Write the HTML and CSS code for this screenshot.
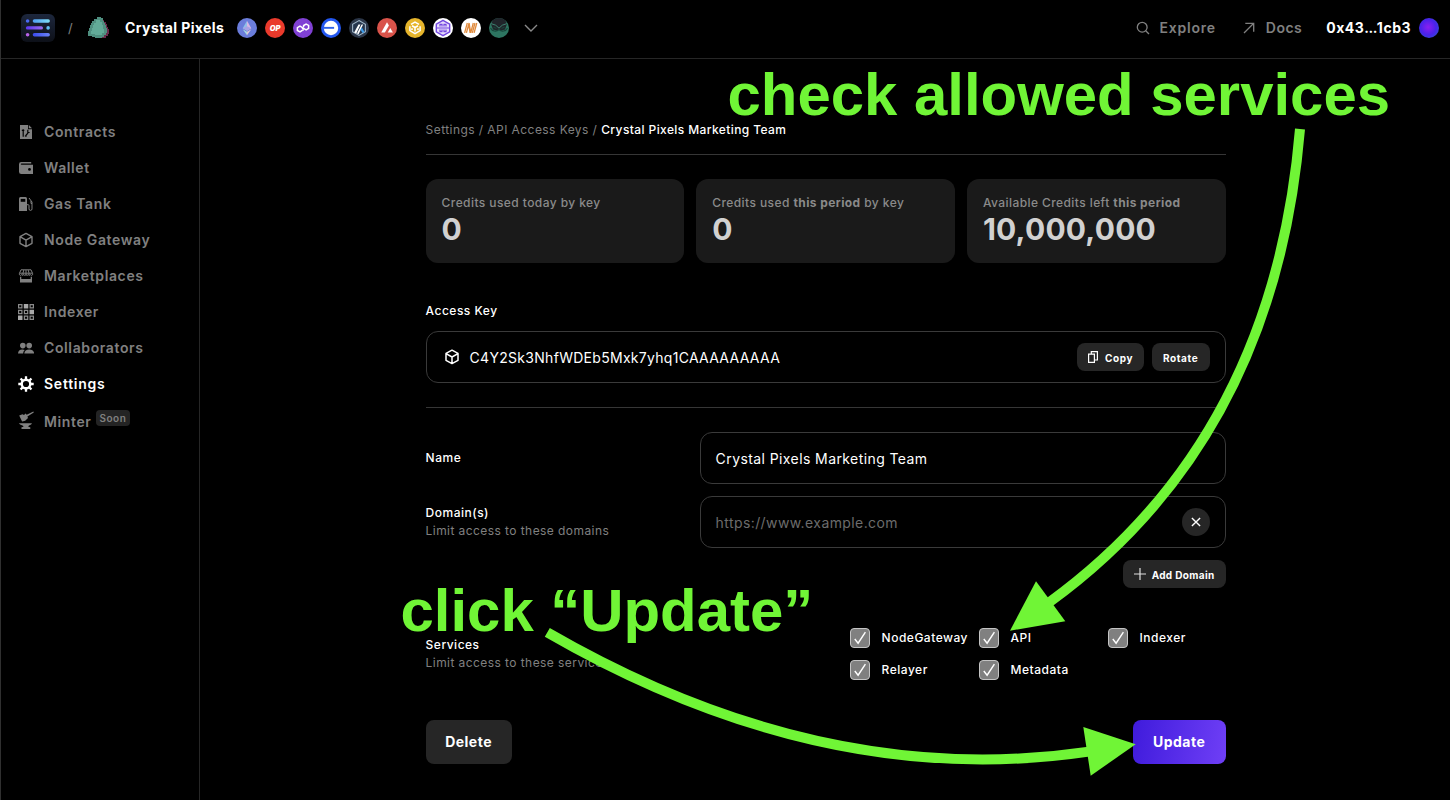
FILE: index.html
```html
<!DOCTYPE html>
<html lang="en">
<head>
<meta charset="utf-8">
<title>Crystal Pixels</title>
<link rel="stylesheet" href="styles.css">
</head>
<body>
<div class="app">
  <header class="topbar">
    <svg class="logo" width="34" height="28" viewBox="0 0 34 28">
      <defs>
        <linearGradient id="lg0" x1="0" y1="0" x2="0" y2="1"><stop offset="0" stop-color="#1d273d"/><stop offset="1" stop-color="#0d1018"/></linearGradient>
        <linearGradient id="lg1" x1="0" x2="1"><stop offset="0" stop-color="#4f9ef3"/><stop offset="1" stop-color="#7fe0f6"/></linearGradient>
        <linearGradient id="lg2" x1="0" x2="1"><stop offset="0" stop-color="#5a35f2"/><stop offset="1" stop-color="#9a6cf0"/></linearGradient>
        <linearGradient id="lg3" x1="0" x2="1"><stop offset="0" stop-color="#3b4cf0"/><stop offset="1" stop-color="#6b83f5"/></linearGradient>
      </defs>
      <rect width="34" height="28" rx="6" fill="url(#lg0)"/>
      <circle cx="6.6" cy="7" r="1.8" fill="#4a6af2"/><rect x="11.7" y="5.3" width="17.2" height="3.4" rx="1.7" fill="url(#lg1)"/>
      <rect x="4.8" y="12.2" width="17.2" height="3.4" rx="1.7" fill="url(#lg2)"/><circle cx="27.1" cy="13.9" r="1.8" fill="#61bdf0"/>
      <circle cx="6.6" cy="20.8" r="1.8" fill="#b862e8"/><rect x="11.7" y="19.1" width="17.2" height="3.4" rx="1.7" fill="url(#lg3)"/>
    </svg>
    <span class="slash">/</span>
    <svg class="gem" width="22" height="22" viewBox="0 0 22 22">
      <path d="M13 1h2v2h1v2h2v2h1v3h1v2h1v5h-1v2h-2v2H12z" fill="#6b2a4c"/>
      <path d="M9 0h4v1h2v3h1v2h1v2h1v3h1v5h-1v2h-2v2h-2v1H7v-1H4v-1H0v-5h1v-3h1V8h1V6h1V4h2V2h3z" fill="#4f8f80"/>
      <path d="M8 3h4v2h2v3h1v4h1v4h-2v2H7v-1H3v-3h1v-3h1V8h1V6h2z" fill="#62aa98"/>
    </svg>
    <span class="project">Crystal Pixels</span>
    <div class="chains">
      <svg width="20" height="20" viewBox="0 0 20 20"><circle cx="10" cy="10" r="10" fill="#6b7ddb"/><path d="M10 2.8L5.7 10.2 10 12.7z" fill="#8fc0e8"/><path d="M10 2.8l4.3 7.4L10 12.7z" fill="#d9b7e4"/><path d="M5.7 10.2L10 8.2l4.3 2L10 12.7z" fill="#a9a3e6"/><path d="M5.7 11.3L10 17.2v-3.4z" fill="#a8dbe0"/><path d="M14.3 11.3L10 17.2v-3.4z" fill="#dcc6d8"/></svg>
      <svg width="20" height="20" viewBox="0 0 20 20"><circle cx="10" cy="10" r="10" fill="#ea3a2c"/><text class="op" x="10" y="12.8" text-anchor="middle">OP</text></svg>
      <svg width="20" height="20" viewBox="0 0 20 20"><circle cx="10" cy="10" r="10" fill="#8040d4"/><path d="M9.300 12.400L7 13.900 4.400 12.500V9.700L7 8.200l2.500 1.500v1.300M10.600 9.300V7.500l2.500-1.500 2.500 1.400v2.900l-2.500 1.500-2.500-1.400M9.400 12.300l1.300-.8M9.400 9.600l1.300.9" fill="none" stroke="#fff" stroke-width="1.500"/></svg>
      <svg width="20" height="20" viewBox="0 0 20 20"><circle cx="10" cy="10" r="10" fill="#2357f0"/><circle cx="10" cy="10" r="7.2" fill="#fff"/><path d="M2.500 8.900h10.600v1.900H2.500z" fill="#2f61e8"/></svg>
      <svg width="20" height="20" viewBox="0 0 20 20"><circle cx="10" cy="10" r="10" fill="#2b3648"/><path d="M10 2.600l6.400 3.600v7.600L10 17.400l-6.400-3.600V6.200z" fill="#26364d" stroke="#9db3c6" stroke-width="1.100"/><path d="M9.500 6.500h2L7.300 15.500l-2.200-1z" fill="#fff"/><path d="M12.600 6.500h1.500L9.600 16.200l-1.600-.8z" fill="#fff"/><path d="M12.700 9.300l2.800 4.600-1.900 1.200-2.100-3.400z" fill="#3c9be8"/></svg>
      <svg width="20" height="20" viewBox="0 0 20 20"><circle cx="10" cy="10" r="10" fill="#d9534a"/><path d="M10 4.200l1.900 3.300-4 6.900H4.200z" fill="#fff"/><path d="M13.300 9.900l2.600 4.500h-5.200z" fill="#fff"/></svg>
      <svg width="20" height="20" viewBox="0 0 20 20"><circle cx="10" cy="10" r="10" fill="#e6b52c"/><path d="M6 6.300L10 4l4 2.300M4.900 8.200v4.400L10 15.700l5.100-3.100V8.200" fill="none" stroke="#fff" stroke-width="1.500"/><path d="M7 7.700l3 1.800 3-1.800M10 9.500v4M7 10.300v1.600M13 10.300v1.600" fill="none" stroke="#fff" stroke-width="1.600"/></svg>
      <svg width="20" height="20" viewBox="0 0 20 20"><circle cx="10" cy="10" r="10" fill="#fff"/><path d="M10 2.300l6.700 3.800v7.800L10 17.700l-6.700-3.800V6.100z" fill="#e6dcfb" stroke="#7347e0" stroke-width="1.400"/><path d="M3.500 10h13M7 8.600V6.400h2v2.200M11 8.600V6.400h2v2.200M7 11.500v2.200h2v-2.200M11 11.500v2.200h2v-2.200" fill="none" stroke="#7347e0" stroke-width="1.200"/></svg>
      <svg width="20" height="20" viewBox="0 0 20 20"><circle cx="10" cy="10" r="10" fill="#fff"/><path d="M3.600 14.800L6.300 5M5.400 14.800L8.100 5l1.600 9.800L12.300 5M8.100 9l1 5.800M11.300 14.800L14 5M13.100 14.800L15.800 5" fill="none" stroke="#e08a3c" stroke-width="1.300"/></svg>
      <svg width="20" height="20" viewBox="0 0 20 20"><circle cx="10" cy="10" r="10" fill="#2d7561"/><path d="M3.800 2.200a10 10 0 0 1 12.400 0L18 6l-2 5.500-4 1-2-1-2 1-4-1L2 6z" fill="#20242a"/><path d="M2 5.600l4.700 1.600L10 10.200l3.300-3L18 5.600" fill="none" stroke="#3d8270" stroke-width="1"/><path d="M1.500 10c1.500 3.500 6 4 8.500 1.500 2.500 2.500 7 2 8.500-1.500M4.500 9l3 1.500M15.500 9l-3 1.500" fill="none" stroke="#18463b" stroke-width="1.100"/></svg>
    </div>
    <svg class="chevron" width="14" height="8" viewBox="0 0 14 8"><path d="M1 1l6 6 6-6" fill="none" stroke="#8a8a8a" stroke-width="1.400"/></svg>
    <nav class="toplinks">
      <a class="toplink explore"><svg width="14" height="14" viewBox="0 0 14 14"><circle cx="6.200" cy="6.200" r="4.900" fill="none" stroke="#808080" stroke-width="1.300"/><path d="M9.700 9.700l3.300 3.300" stroke="#808080" stroke-width="1.300"/></svg><span>Explore</span></a>
      <a class="toplink docs"><svg width="12" height="12" viewBox="0 0 12 12"><path d="M1 11L10.500 1.500M2.300 1.300h8.400v8.400" fill="none" stroke="#808080" stroke-width="1.300"/></svg><span>Docs</span></a>
      <span class="account">0x43<span class="dots">...</span>1cb3</span>
      <span class="avatar"></span>
    </nav>
  </header>

  <div class="body">
    <aside class="sidebar">
      <a class="item"><svg width="16" height="16" viewBox="0 0 16 16"><path d="M2 1h8v4.200h4V15H2z" fill="#808080"/><path d="M10.800 1L14 4.300h-3.200z" fill="#808080"/><path d="M5.200 12.700V5.300M3.800 6.300h2.500M9.800 5.800v3.400L8 11.300v1.500M6.800 12h1.500M9.800 8.500h1.800" fill="none" stroke="#000" stroke-width="1.200"/></svg><span>Contracts</span></a>
      <a class="item"><svg width="16" height="16" viewBox="0 0 16 16"><path d="M13.200 2H3.300A2.300 2.300 0 0 0 1 4.300v7.400A2.300 2.300 0 0 0 3.300 14H15V4.800H3.500c-1 0-1-1.300 0-1.300h9.700z" fill="#808080"/><circle cx="11.500" cy="9.400" r="1.400" fill="#000"/></svg><span>Wallet</span></a>
      <a class="item"><svg width="16" height="16" viewBox="0 0 16 16"><path d="M1 2.500Q1 1 2.500 1h5Q9 1 9 2.500V15H1z" fill="#808080"/><path d="M2.700 2.900h4.600v2.900H2.700z" fill="#000"/><path d="M9 8.700h1.200q.8 0 .8.900v3.300q0 1.500 1.500 1.500T14 12.900V6l-3-4M13 5v2.500h1" fill="none" stroke="#808080" stroke-width="1"/></svg><span>Gas Tank</span></a>
      <a class="item"><svg width="16" height="16" viewBox="0 0 16 16"><path d="M8 1.400l6 3.300v6.600l-6 3.300-6-3.300V4.700zM2 4.700l6 3.400 6-3.400M8 8.100v6.500" fill="none" stroke="#808080" stroke-width="1.400" stroke-linejoin="round"/></svg><span>Node Gateway</span></a>
      <a class="item"><svg width="16" height="16" viewBox="0 0 16 16"><path d="M3 1.800h10l1.600 3.700v1.200q-1.100 1.400-2.200 0-1.100 1.400-2.200 0-1.100 1.400-2.200 0-1.100 1.400-2.200 0-1.100 1.400-2.200 0-1.100 1.400-2.200 0V5.500zM1.600 5.200h12.800M5.800 2L5 5v2M10.200 2l.8 3v2M8 2v5" fill="none" stroke="#808080" stroke-width="1"/><path d="M2 8.700h12V14.500H2zM3.300 8.700v2.300h9.400V8.700z" fill="#808080" fill-rule="evenodd"/></svg><span>Marketplaces</span></a>
      <a class="item"><svg width="16" height="16" viewBox="0 0 16 16"><g fill="none" stroke="#8a8a8a" stroke-width="1.200"><path d="M.6.600h3.300v3.300H.6zM12.100.600h3.300v3.300h-3.300zM.6 6.400h3.300v3.300H.6zM6.400 6.400h3.300v3.300H6.400zM6.400 12.100h3.300v3.300H6.400zM12.100 12.100h3.300v3.300h-3.300z"/></g><path d="M5.800 0h4.500v4.500H5.800zM11.500 5.800H16v4.500h-4.500zM0 11.500h4.500V16H0z" fill="#a8a8a8"/></svg><span>Indexer</span></a>
      <a class="item"><svg width="16" height="16" viewBox="0 0 16 16"><circle cx="4.800" cy="5.600" r="2.800" fill="#808080"/><circle cx="11.200" cy="5.600" r="2.800" fill="#808080"/><path d="M0 13.400q.3-3.600 4.300-3.900 1.500 0 2.400.5-1.500 1.300-1.600 3.400zM6.300 13.400q.4-4 4.900-4t5 4z" fill="#808080"/></svg><span>Collaborators</span></a>
      <a class="item active"><svg width="16" height="16" viewBox="0 0 16 16"><circle cx="8" cy="8" r="4.300" fill="none" stroke="#fff" stroke-width="2.400"/><path d="M8 .3v3M8 12.700v3M.3 8h3M12.700 8h3M2.550 2.550l2.100 2.100M11.350 11.350l2.100 2.100M2.550 13.450l2.100-2.100M11.350 4.650l2.100-2.100" stroke="#fff" stroke-width="2.300"/></svg><span>Settings</span></a>
      <a class="item minter"><svg width="16" height="18" viewBox="0 0 16 18"><path d="M1.200 4.600l2.900 6 3.100-.9 2.800-2.600-.6-1.700L15.800 1.500 15.400.400 8.700 3.800 7.600 2.500 6 4 4.500 3.200z" fill="#808080"/><path d="M.8 12.300H14q-.3 1.500-3 2.200-.7.300-.7 1 .2.700 2 .7V18H3.500v-1.800q1.800 0 2-.7 0-.7-1-1Q1.500 13.800.8 12.300z" fill="#808080"/></svg><span>Minter</span><span class="soon">Soon</span></a>
    </aside>

    <main class="content">
      <div class="crumbs"><span class="dim">Settings / API Access Keys / </span><span>Crystal Pixels Marketing Team</span></div>
      <div class="rule"></div>
      <section class="stats">
        <div class="stat"><div class="label">Credits used today by key</div><div class="value">0</div></div>
        <div class="stat"><div class="label">Credits used <b>this period</b> by key</div><div class="value">0</div></div>
        <div class="stat"><div class="label">Available Credits left <b>this period</b></div><div class="value">10,000,000</div></div>
      </section>
      <div class="keylabel">Access Key</div>
      <div class="field keyfield">
        <svg width="16" height="16" viewBox="0 0 16 16"><path d="M8 1.200l6 3.200v6.900l-6 3.300-6-3.300V4.400zM2 4.700l6 3.300 6-3.300M8 8v6.400" fill="none" stroke="#fff" stroke-width="1.500" stroke-linejoin="round"/></svg>
        <span class="key">C4Y2Sk3NhfWDEb5Mxk7yhq1CAAAAAAAAA</span>
        <button class="btn small copy"><svg width="12" height="12" viewBox="0 0 12 12"><path d="M1.600 3.100h5.800v8.300H1.600zM4.300 3V.700h6.100V9H7.600" fill="none" stroke="#fff" stroke-width="1.200"/></svg><span>Copy</span></button>
        <button class="btn small rotate"><span>Rotate</span></button>
      </div>
      <div class="rule second"></div>
      <div class="row">
        <div class="rowlabel">Name</div>
        <div class="field wide">Crystal Pixels Marketing Team</div>
      </div>
      <div class="row domains">
        <div class="rowlabel">Domain(s)<div class="hint">Limit access to these domains</div></div>
        <div class="field wide placeholder"><span>https://www.example.com</span><button class="clear"><svg width="10" height="10" viewBox="0 0 10 10"><path d="M.900.900l8.200 8.200M9.100.900L.900 9.100" stroke="#fff" stroke-width="1.400"/></svg></button></div>
      </div>
      <div class="addrow"><button class="btn small add"><svg width="12" height="12" viewBox="0 0 12 12"><path d="M6 0v12M0 6h12" stroke="#e0e0e0" stroke-width="1.200"/></svg><span>Add Domain</span></button></div>
      <div class="row services">
        <div class="rowlabel">Services<div class="hint">Limit access to these services</div></div>
        <div class="checks">
          <label class="check"><span class="box"><svg width="18" height="18" viewBox="0 0 18 18"><path d="M3.800 10l3.300 4.200 7.300-11" fill="none" stroke="#fff" stroke-width="1.400"/></svg></span>NodeGateway</label>
          <label class="check"><span class="box"><svg width="18" height="18" viewBox="0 0 18 18"><path d="M3.800 10l3.300 4.200 7.300-11" fill="none" stroke="#fff" stroke-width="1.400"/></svg></span>API</label>
          <label class="check"><span class="box"><svg width="18" height="18" viewBox="0 0 18 18"><path d="M3.800 10l3.300 4.200 7.300-11" fill="none" stroke="#fff" stroke-width="1.400"/></svg></span>Indexer</label>
          <label class="check"><span class="box"><svg width="18" height="18" viewBox="0 0 18 18"><path d="M3.800 10l3.300 4.200 7.300-11" fill="none" stroke="#fff" stroke-width="1.400"/></svg></span>Relayer</label>
          <label class="check"><span class="box"><svg width="18" height="18" viewBox="0 0 18 18"><path d="M3.800 10l3.300 4.200 7.300-11" fill="none" stroke="#fff" stroke-width="1.400"/></svg></span>Metadata</label>
        </div>
      </div>
      <div class="actions"><button class="btn large">Delete</button><button class="btn large primary">Update</button></div>
    </main>
  </div>

  <svg class="notes" width="1450" height="800" viewBox="0 0 1450 800">
    <path d="M1300 129Q1274 439 1049 602.500" class="stroke"/>
    <path d="M1010 630.700L1036 581.300 1065.300 621.300z" class="head"/>
    <path d="M547.300 632.300Q822 791 1089 751.600" class="stroke"/>
    <path d="M1135.700 744.300L1083.300 727 1090.700 775.700z" class="head"/>
    <text class="note" x="727.500" y="115.300">check allowed services</text>
    <text class="note" x="400.500" y="631.300">click “Update”</text>
  </svg>
</div>
</body>
</html>
```
FILE: styles.css
```css
* { box-sizing: border-box; }
body {
  margin: 0;
  background: #000;
  color: #fff;
  font-family: Inter, "Liberation Sans", sans-serif;
  font-size: 14px;
  letter-spacing: 0.5px;
}
button { font: inherit; letter-spacing: inherit; color: inherit; border: 0; padding: 0; }
svg { display: block; flex: none; }

.app {
  position: relative;
  width: 1450px;
  height: 800px;
  overflow: hidden;
  border-left: 1px solid #303030;
  display: flex;
  flex-direction: column;
}

.topbar {
  height: 59px;
  flex: none;
  border-bottom: 1px solid #262626;
  display: flex;
  align-items: center;
  padding: 0 11px 2px 20px;
  font-weight: 700;
}
.slash { width: 33px; padding-left: 13px; color: #808080; font-weight: 400; font-size: 13px; }
.gem { margin-right: 15px; }
.project { width: 112px; white-space: nowrap; letter-spacing: 0.4px; margin-top: -1px; }
.chains { display: flex; gap: 8px; }
.op { font: italic 900 7.5px Inter, sans-serif; fill: #fff; letter-spacing: 0; }
.chevron { margin-left: 15px; }
.toplinks { margin-left: auto; display: flex; align-items: center; }
.toplinks span { margin-top: -1px; }
.toplink { display: flex; align-items: center; gap: 10px; color: #808080; font-weight: 600; }
.toplink.explore { letter-spacing: 0.75px; }
.toplink.docs { margin-left: 27px; gap: 11px; }
.account { margin-left: 24px; }
.account .dots { letter-spacing: -0.5px; }
.avatar {
  width: 20px;
  height: 20px;
  margin-left: 8px;
  border-radius: 50%;
  background: radial-gradient(circle at 46% 46%, #8a1ff0 0, #4a22ea 50%, #2f4fd0 85%, #356fb5 100%);
}
.toplinks .avatar { margin-top: 0; }

.body { flex: 1; display: flex; }
.sidebar {
  width: 199px;
  flex: none;
  border-right: 1px solid #262626;
  padding: 55px 0 0 17px;
}
.item { display: flex; align-items: center; gap: 10px; height: 36px; color: #808080; font-weight: 600; letter-spacing: 0.62px; }
.item > span { margin-top: -2px; }
.item.active { color: #fff; }
.item.active > span { letter-spacing: 0.75px; }
.item.minter { height: 38px; }
.item.minter > svg { margin-top: -3px; }
.item.minter > span:not(.soon) { margin-top: 1px; }
.item > .soon {
  margin: -7px 0 0 -6px;
  height: 16px;
  padding: 0 4px;
  border-radius: 4px;
  background: #242424;
  font-size: 10px;
  line-height: 17px;
  letter-spacing: 0.5px;
}

.content { width: 800px; margin-left: 225.6px; padding-top: 62px; font-size: 12px; font-weight: 450; line-height: 18px; }
.crumbs { white-space: pre; letter-spacing: 0.4px; }
.dim, .hint { color: #808080; font-weight: 400; letter-spacing: 0.43px; }
.rule { height: 1px; background: #363636; margin-top: 15px; }
.rule.second { margin-top: 24px; }
.stats { display: grid; grid-template-columns: repeat(3, 1fr); gap: 12px; margin-top: 24px; }
.stat { height: 84px; border-radius: 12px; background: #1a1a1a; padding: 15px 16px; color: #8a8a8a; letter-spacing: 0.42px; }
.value { font-size: 30px; font-weight: 700; line-height: 34px; color: #d1d1d1; letter-spacing: 0.2px; }
.keylabel { margin-top: 39px; }
.field {
  height: 52px;
  border: 1px solid #3a3a3a;
  border-radius: 12px;
  display: flex;
  align-items: center;
  font-size: 14px;
  font-weight: 400;
}
.keyfield { margin-top: 11px; padding: 0 15px 0 17px; }
.key { margin: 1px auto 0 10px; letter-spacing: 0.29px; }
.btn { background: #262626; font-weight: 700; display: flex; align-items: center; justify-content: center; }
.btn.small { height: 28px; border-radius: 8px; font-size: 10px; letter-spacing: 0.6px; }
.btn.small span { margin-top: 1px; }
.copy { width: 67px; gap: 6px; }
.rotate { width: 58px; margin-left: 8px; }
.row { display: flex; justify-content: space-between; margin-top: 24px; }
.row.domains { margin-top: 12px; }
.rowlabel { padding-top: 17px; }
.domains .rowlabel { padding-top: 8px; }
.wide { width: 526px; padding: 1px 15px 0; justify-content: space-between; letter-spacing: 0.41px; }
.placeholder { color: #6c6c6c; }
.clear { width: 28px; height: 28px; margin-top: -1px; border-radius: 50%; background: #262626; display: grid; place-items: center; }
.addrow { display: flex; justify-content: flex-end; margin-top: 12px; }
.btn.add { width: 103px; gap: 6px; letter-spacing: 0.35px; }
.row.services { margin-top: 40px; }
.services .rowlabel { padding-top: 8px; }
.checks { display: grid; grid-template-columns: 129px 129px 118px; row-gap: 12px; align-content: start; }
.check { display: flex; align-items: center; height: 20px; }
.box { width: 20px; height: 20px; margin-right: 12px; border: 1px solid #c4c4c4; border-radius: 4px; background: #808080; }
.actions { display: flex; justify-content: space-between; margin-top: 40px; }
.large { width: 86px; height: 44px; border-radius: 8px; font-size: 14px; }
.primary { width: 93px; background: linear-gradient(100deg, #3f1bdc, #6f3ff6); }

.notes { position: absolute; left: -1px; top: 0; pointer-events: none; }
.stroke { fill: none; stroke: #70f536; stroke-width: 10; }
.head { fill: #70f536; }
.note { font: 700 59.9px "Liberation Sans", Arial, sans-serif; fill: #70f536; letter-spacing: 0; }
```
